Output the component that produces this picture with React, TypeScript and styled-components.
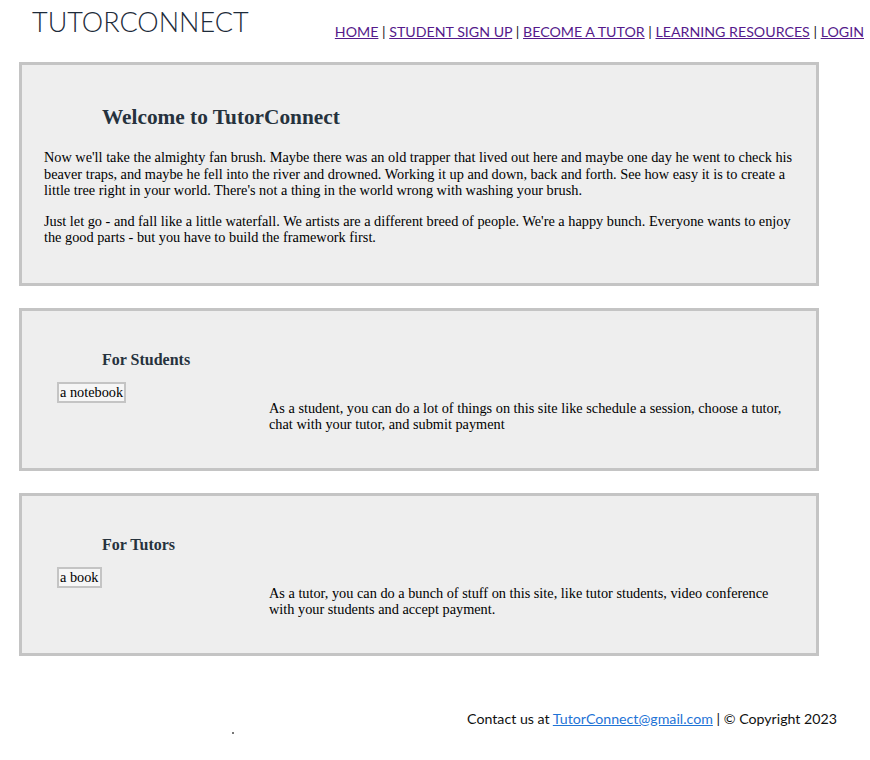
import React from "react";
import styled, { createGlobalStyle } from "styled-components";

const Global = createGlobalStyle`
  html, body { margin: 0; padding: 0; background: #ffffff; }
  body { font-family: "Liberation Serif", "Times New Roman", serif; color: #000; }
`;

const Page = styled.div`
  width: 870px;
  min-height: 760px;
  display: flex;
  flex-direction: column;
`;

const Header = styled.header`
  display: flex;
  align-items: flex-start;
  height: 62px;
`;

const Logo = styled.div`
  font-family: Lato, "Open Sans", sans-serif;
  font-weight: 300;
  font-size: 27px;
  line-height: 1.2;
  color: #1d2b3a;
  margin: 6px 0 0 32px;
`;

const Nav = styled.nav`
  margin: 23px 6px 0 auto;
  font-family: Lato, "Open Sans", sans-serif;
  font-size: 14.2px;
  line-height: 1.2;
  color: #222;
  white-space: nowrap;
`;

const NavLink = styled.a`
  color: #551a8b;
  text-decoration: underline;
`;

const Main = styled.main`
  display: flex;
  flex-direction: column;
  gap: 22px;
  margin-left: 19px;
  width: 800px;
`;

const Card = styled.section<{ $pb: number }>`
  box-sizing: border-box;
  width: 800px;
  background: #eeeeee;
  border: 3px solid #c4c4c4;
  padding: 0 22px ${(p) => p.$pb}px 22px;
`;

const Title = styled.h2`
  margin: 40px 0 20px 58px;
  font-size: 21.3px;
  font-weight: bold;
  line-height: 24px;
  color: #26323d;
`;

const Sub = styled.h3`
  margin: 39px 0 13px 58px;
  font-size: 16px;
  font-weight: bold;
  line-height: 19px;
  color: #26323d;
`;

const Para = styled.p`
  margin: 0 0 14px 0;
  font-size: 14.3px;
  line-height: 16.5px;
  &:last-child { margin-bottom: 0; }
`;

const Row = styled.div`
  display: flex;
  align-items: flex-start;
`;

const ImgCol = styled.div`
  width: 225px;
  flex: none;
  padding-left: 13px;
  box-sizing: border-box;
`;

const BrokenImg = styled.span`
  display: inline-block;
  border: 2px solid #c4c4c4;
  background: #f6f6f6;
  font-size: 14.3px;
  line-height: 17px;
  padding: 0 1px;
`;

const RowText = styled.p`
  margin: 18px 0 0 0;
  font-size: 14.3px;
  line-height: 16.5px;
  width: 526px;
`;

const Footer = styled.footer`
  display: flex;
  align-items: flex-start;
  margin-top: 54px;
  padding: 0 33px 0 232px;
  font-family: Lato, "Open Sans", sans-serif;
  font-size: 14.2px;
  line-height: 18px;
  color: #111;
`;

const Dot = styled.span`
  width: 2px;
  height: 2px;
  background: #777;
  margin-top: 22px;
`;

const FooterText = styled.div`
  margin-left: auto;
`;

const MailLink = styled.a`
  color: #1f74d6;
  text-decoration: underline;
`;

const navItems = ["HOME", "STUDENT SIGN UP", "BECOME A TUTOR", "LEARNING RESOURCES", "LOGIN"];

export default function App() {
  return (
    <Page>
      <Global />
      <Header>
        <Logo>TUTORCONNECT</Logo>
        <Nav>
          {navItems.map((n, i) => (
            <React.Fragment key={n}>
              {i > 0 && " | "}
              <NavLink href="#">{n}</NavLink>
            </React.Fragment>
          ))}
        </Nav>
      </Header>
      <Main>
        <Card $pb={37}>
          <Title>Welcome to TutorConnect</Title>
          <Para>
            Now we'll take the almighty fan brush. Maybe there was an old trapper that lived out here and maybe one day he went to check his beaver traps, and maybe he fell into the river and drowned. Working it up and down, back and forth. See how easy it is to create a little tree right in your world. There's not a thing in the world wrong with washing your brush.
          </Para>
          <Para>
            Just let go - and fall like a little waterfall. We artists are a different breed of people. We're a happy bunch. Everyone wants to enjoy the good parts - but you have to build the framework first.
          </Para>
        </Card>
        <Card $pb={35}>
          <Sub>For Students</Sub>
          <Row>
            <ImgCol>
              <BrokenImg>a notebook</BrokenImg>
            </ImgCol>
            <RowText>
              As a student, you can do a lot of things on this site like schedule a session, choose a tutor, chat with your tutor, and submit payment
            </RowText>
          </Row>
        </Card>
        <Card $pb={35}>
          <Sub>For Tutors</Sub>
          <Row>
            <ImgCol>
              <BrokenImg>a book</BrokenImg>
            </ImgCol>
            <RowText>
              As a tutor, you can do a bunch of stuff on this site, like tutor students, video conference with your students and accept payment.
            </RowText>
          </Row>
        </Card>
      </Main>
      <Footer>
        <Dot />
        <FooterText>
          Contact us at <MailLink href="#">TutorConnect@gmail.com</MailLink> | © Copyright 2023
        </FooterText>
      </Footer>
    </Page>
  );
}
